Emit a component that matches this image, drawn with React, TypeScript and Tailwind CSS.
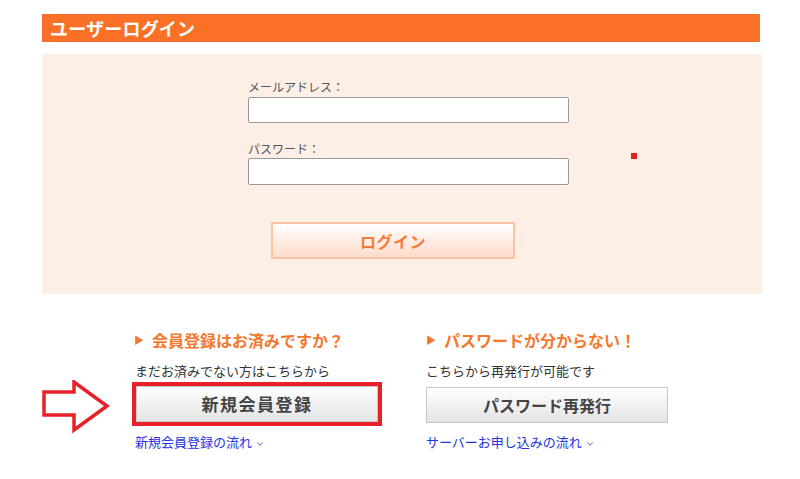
import { ChevronDown } from 'lucide-react';

const font = { fontFamily: '"Noto Sans CJK JP", "Noto Sans", sans-serif' };

function RightArrow() {
  return (
    <svg width="68" height="54" viewBox="0 0 68 54" className="block">
      <polygon
        points="2,12 32,12 32,2 65,26 32,50 32,35 2,35"
        fill="white"
        stroke="#e8202a"
        strokeWidth="3.5"
        strokeLinejoin="miter"
      />
    </svg>
  );
}

function Heading({ children }: { children: React.ReactNode }) {
  return (
    <h2 className="flex items-center h-5 text-[16px] font-bold text-[#f5772e] leading-5">
      <span className="text-[10px] mr-[8px]">▶</span>
      {children}
    </h2>
  );
}

export default function App() {
  return (
    <div className="w-[800px] h-[479px] bg-white overflow-hidden pt-[14px] pl-[42px]" style={font}>
      {/* Title bar */}
      <div className="w-[718px] h-[28px] bg-[#f97026] flex items-center pl-[8px]">
        <h1 className="text-[18px] font-bold text-white leading-none tracking-[0.2px]">ユーザーログイン</h1>
      </div>

      {/* Login panel */}
      <div className="relative mt-[12px] w-[720px] h-[240px] bg-[#fdeee6] pt-[25px] pl-[206px]">
        <label className="block text-[12px] leading-4 text-[#555]">メールアドレス：</label>
        <input
          type="text"
          className="block mt-[2px] w-[321px] h-[26px] bg-white border border-[#999] rounded-[2px]"
        />
        <label className="block mt-[18px] text-[12px] leading-4 text-[#555]">パスワード：</label>
        <input
          type="password"
          className="block mt-[1px] w-[321px] h-[27px] bg-white border border-[#999] rounded-[2px]"
        />
        <button className="block mt-[37px] ml-[23px] w-[244px] h-[37px] border-2 border-[#fcc3a3] bg-gradient-to-b from-white to-[#fddccb] text-[16px] font-bold text-[#f47a3d] tracking-[0.5px]">
          ログイン
        </button>
        <span className="absolute left-[589px] top-[99px] w-[6px] h-[6px] bg-[#e62020]" />
      </div>

      {/* Lower section */}
      <div className="flex mt-[36px]">
        <div className="w-[90px] pt-[50px]">
          <RightArrow />
        </div>

        <div className="w-[294px]">
          <div className="pl-[2px]">
            <Heading>会員登録はお済みですか？</Heading>
          </div>
          <p className="mt-[12px] pl-[3px] text-[13px] leading-[18px] text-[#333]">まだお済みでない方はこちらから</p>
          <div className="mt-[2px] w-[250px] border-4 border-[#e8202a]">
            <button className="block w-full h-[36px] border border-[#c8c8c8] bg-gradient-to-b from-white to-[#e4e4e4] text-[17px] font-bold text-[#444] tracking-[1.5px]">
              新規会員登録
            </button>
          </div>
          <a className="mt-[7px] pl-[3px] flex items-center text-[13px] leading-[18px] text-[#2233dd]">
            新規会員登録の流れ
            <ChevronDown className="w-[10px] h-[10px] ml-[3px] mt-[3px] text-[#6b7bd6]" strokeWidth={2.5} />
          </a>
        </div>

        <div className="w-[300px]">
          <Heading>パスワードが分からない！</Heading>
          <p className="mt-[12px] text-[13px] leading-[18px] text-[#333]">こちらから再発行が可能です</p>
          <div className="mt-[7px] w-[242px]">
            <button className="block w-full h-[36px] border border-[#c8c8c8] bg-gradient-to-b from-white to-[#e4e4e4] text-[16px] font-bold text-[#444]">
              パスワード再発行
            </button>
          </div>
          <a className="mt-[10px] flex items-center text-[13px] leading-[18px] text-[#2233dd]">
            サーバーお申し込みの流れ
            <ChevronDown className="w-[10px] h-[10px] ml-[3px] mt-[3px] text-[#6b7bd6]" strokeWidth={2.5} />
          </a>
        </div>
      </div>
    </div>
  );
}
